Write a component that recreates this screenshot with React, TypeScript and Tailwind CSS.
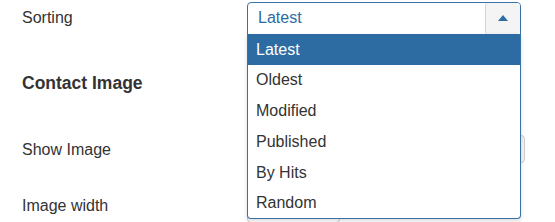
const options = ['Latest', 'Oldest', 'Modified', 'Published', 'By Hits', 'Random']

export default function App() {
  return (
    <div
      className="relative w-[555px] h-[222px] overflow-hidden bg-white text-[16px] text-[#333]"
      style={{ fontFamily: '"Liberation Sans", Arial, sans-serif' }}
    >
      {/* form rows */}
      <div className="flex flex-col">
        <div className="flex items-center h-[35px]">
          <div className="w-[247px] pl-[22px]">Sorting</div>
          <div className="relative mt-[1px] h-[33px] w-[274px]">
            <div className="flex items-center h-full border border-[#3a72a8] rounded-t-[4px] bg-white">
              <span className="pl-[10px] flex-1 text-[#2d6ca2]">Latest</span>
              <div className="flex items-center justify-center w-[35px] h-[31px] bg-[#f4f4f4] border-l border-[#d4d4d4] rounded-[3px]">
                <svg width="10" height="6" viewBox="0 0 10 6">
                  <path d="M5 0 L10 6 L0 6 Z" fill="#2d6ca2" />
                </svg>
              </div>
            </div>
            {/* open list */}
            <ul className="absolute left-0 top-[32px] z-10 w-[274px] bg-white border border-[#3a72a8] border-t-0 rounded-b-[4px] shadow-[0_2px_4px_rgba(0,0,0,0.15)]">
              {options.map((o, i) => (
                <li
                  key={o}
                  className={
                    i === 0
                      ? 'h-[31px] flex items-center pl-[8px] pt-[1px] bg-[#2d6ca2] text-white'
                      : i > 3
                        ? 'h-[30px] flex items-center pl-[8px] text-[#333]'
                        : 'h-[31px] flex items-center pl-[8px] text-[#333]'
                  }
                >
                  {o}
                </li>
              ))}
            </ul>
          </div>
        </div>

        <div className="pl-[22px] mt-[36px] h-[24px] leading-[24px] text-[17.5px] font-bold">Contact Image</div>

        <div className="flex items-center mt-[40px] h-[28px]">
          <div className="w-[247px] pl-[22px] pt-[1px]">Show Image</div>
          <div className="h-[28px] w-[278px] border border-[#ccc] rounded-[4px] bg-[#f4f4f4]" />
        </div>

        <div className="flex items-center mt-[26px] h-[34px]">
          <div className="w-[247px] pl-[22px]">Image width</div>
          <div className="h-[34px] w-[93px] border border-[#ccc] rounded-[4px] bg-white" />
        </div>
      </div>
    </div>
  )
}
